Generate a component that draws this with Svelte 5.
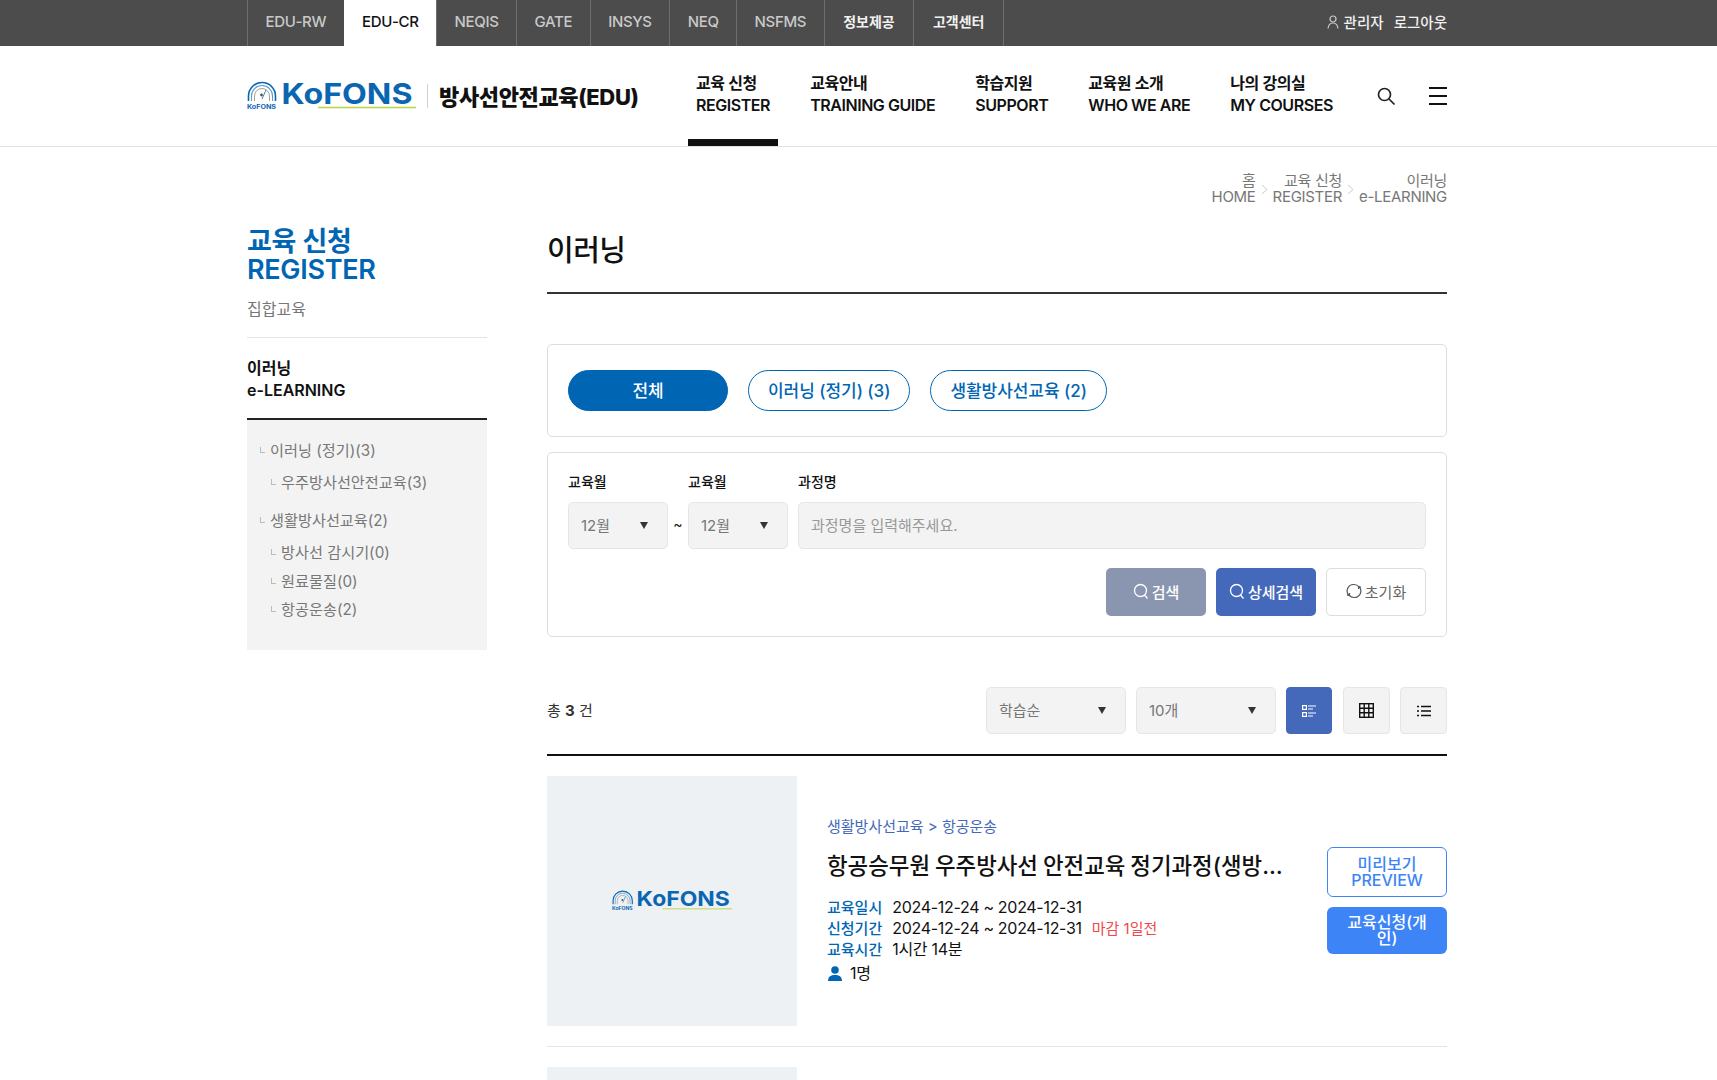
<script>
	const sites = ['EDU-RW', 'EDU-CR', 'NEQIS', 'GATE', 'INSYS', 'NEQ', 'NSFMS', '정보제공', '고객센터'];
	const menus = [
		['교육 신청', 'REGISTER'],
		['교육안내', 'TRAINING GUIDE'],
		['학습지원', 'SUPPORT'],
		['교육원 소개', 'WHO WE ARE'],
		['나의 강의실', 'MY COURSES']
	];
	const crumbs = [['홈', 'HOME'], ['교육 신청', 'REGISTER'], ['이러닝', 'e-LEARNING']];
	const tree = [
		{ label: '이러닝 (정기)(3)', children: ['우주방사선안전교육(3)'] },
		{ label: '생활방사선교육(2)', children: ['방사선 감시기(0)', '원료물질(0)', '항공운송(2)'] }
	];
</script>

{#snippet logo(width)}
	<svg class="logo" {width} viewBox="0 0 170 30" role="img" aria-label="KoFONS">
		<g fill="none" stroke="#0b66b2">
			<path d="M1.5 20 V15 A13.5 13.5 0 0 1 28.5 15 V20" stroke-width="1.6" />
			<path d="M4.5 20 V15 A10.5 10.5 0 0 1 25.5 15 V20" stroke-width="1.1" stroke="#5d9ccf" />
			<path d="M7.5 20 V15 A7.5 7.5 0 0 1 22.5 15 V20" stroke-width="0.9" stroke="#9a9a7a" />
			<path d="M15 18 L19 9" stroke-width="0.8" />
		</g>
		<circle cx="14.5" cy="14" r="1.4" fill="#555" />
		<text x="0" y="28" class="logo-small" textLength="29" lengthAdjust="spacingAndGlyphs">KoFONS</text>
		<text x="34.5" y="23" class="logo-big" textLength="131" lengthAdjust="spacingAndGlyphs">KoFONS</text>
		<path d="M71 26.5 H169" stroke="#b7d444" stroke-width="1.3" />
	</svg>
{/snippet}

<div class="page">
	<div class="topbar">
		<div class="wrap topbar-in">
			<ul class="sites">
				{#each sites as site}
					<li class:active={site === 'EDU-CR'} class:kr={site === '정보제공' || site === '고객센터'}>{site}</li>
				{/each}
			</ul>
			<div class="account">
				<svg width="12" height="14" viewBox="0 0 12 14" fill="none" stroke="#ccc" stroke-width="1.2">
					<circle cx="6" cy="4" r="3" />
					<path d="M1 13.5 C1.5 9.5 3.5 8 6 8 C8.5 8 10.5 9.5 11 13.5" />
				</svg>
				<span>관리자</span>
				<span class="logout">로그아웃</span>
			</div>
		</div>
	</div>

	<header>
		<div class="wrap header-in">
			<div class="brand">
				{@render logo(170)}
				<i class="brand-sep"></i>
				<strong>방사선안전교육(EDU)</strong>
			</div>
			<nav>
				{#each menus as menu, i}
					<a href="#top" class:current={i === 0}>
						<span>{menu[0]}</span>
						<span>{menu[1]}</span>
					</a>
				{/each}
			</nav>
			<svg class="search-icon" width="20" height="20" viewBox="0 0 20 20" fill="none" stroke="#222" stroke-width="1.7">
				<circle cx="8.5" cy="8.5" r="6" />
				<path d="M13 13 L18.5 18.5" />
			</svg>
			<div class="burger"><i></i><i></i><i></i></div>
		</div>
	</header>

	<div class="wrap">
		<div class="crumbs">
			{#each crumbs as crumb, i}
				{#if i > 0}<svg class="crumb-sep" width="7" height="11" viewBox="0 0 7 11" fill="none" stroke="#ccc"><path d="M1 1 L6 5.5 L1 10" /></svg>{/if}
				<div class="crumb">
					<span>{crumb[0]}</span>
					<span>{crumb[1]}</span>
				</div>
			{/each}
		</div>

		<div class="columns">
			<aside>
				<h2>교육 신청<br />REGISTER</h2>
				<p class="side-link">집합교육</p>
				<div class="side-current">이러닝<br />e-LEARNING</div>
				<div class="side-tree">
					{#each tree as group}
						<div class="tree-group">
							<div class="tree-item">{group.label}</div>
							{#each group.children as child}
								<div class="tree-item child">{child}</div>
							{/each}
						</div>
					{/each}
				</div>
			</aside>

			<main>
				<h1>이러닝</h1>

				<div class="box pills">
					<button class="pill on">전체</button>
					<button class="pill">이러닝 (정기) (3)</button>
					<button class="pill">생활방사선교육 (2)</button>
				</div>

				<div class="box filter">
					<div class="fields">
						<div class="field month">
							<span class="field-label">교육월</span>
							<div class="select">12월</div>
						</div>
						<span class="tilde">~</span>
						<div class="field month">
							<span class="field-label">교육월</span>
							<div class="select">12월</div>
						</div>
						<div class="field grow">
							<span class="field-label">과정명</span>
							<div class="text-input">과정명을 입력해주세요.</div>
						</div>
					</div>
					<div class="actions">
						<button class="act gray">
							<svg width="16" height="17" viewBox="0 0 16 17" fill="none" stroke="currentColor" stroke-width="1.3"><circle cx="7.5" cy="7.5" r="6" /><path d="M11.5 12 L14.5 15.5" /></svg>
							검색
						</button>
						<button class="act blue">
							<svg width="16" height="17" viewBox="0 0 16 17" fill="none" stroke="currentColor" stroke-width="1.3"><circle cx="7.5" cy="7.5" r="6" /><path d="M11.5 12 L14.5 15.5" /></svg>
							상세검색
						</button>
						<button class="act plain">
							<svg width="16" height="16" viewBox="0 0 16 16" fill="none" stroke="#555" stroke-width="1.2"><path d="M3 12.5 A6.5 6.5 0 0 1 8 1.5 A6.5 6.5 0 0 1 13 3.8" /><path d="M13 3.5 A6.5 6.5 0 0 1 8 14.5 A6.5 6.5 0 0 1 3 12.2" /><path d="M1 12 L3.2 12.5 L3.6 10" /><path d="M15 4 L12.8 3.8 L12.4 6" /></svg>
							초기화
						</button>
					</div>
				</div>

				<div class="toolbar">
					<div class="total">총 <b>3</b> 건</div>
					<div class="select wide">학습순</div>
					<div class="select wide">10개</div>
					<button class="view on" aria-label="카드형">
						<svg width="14" height="12" viewBox="0 0 14 12" fill="none" stroke="#fff" stroke-width="1.2"><rect x="0.6" y="0.6" width="3.8" height="3.8" /><rect x="0.6" y="7.6" width="3.8" height="3.8" /><path d="M6 1 H14 M6 4 H11 M6 8 H14 M6 11 H11" /></svg>
					</button>
					<button class="view" aria-label="격자형">
						<svg width="15" height="15" viewBox="0 0 15 15" fill="none" stroke="#111" stroke-width="1.4"><rect x="0.7" y="0.7" width="13.6" height="13.6" /><path d="M5.2 0.7 V14.3 M9.8 0.7 V14.3 M0.7 5.2 H14.3 M0.7 9.8 H14.3" /></svg>
					</button>
					<button class="view" aria-label="목록형">
						<svg width="14" height="12" viewBox="0 0 14 12" fill="none" stroke="#111" stroke-width="1.3"><path d="M0 1.5 H2 M4 1.5 H14 M0 6 H2 M4 6 H14 M0 10.5 H2 M4 10.5 H14" /></svg>
					</button>
				</div>

				<article>
					<div class="thumb">{@render logo(121)}</div>
					<div class="info">
						<div class="category">생활방사선교육 &gt; 항공운송</div>
						<div class="title">항공승무원 우주방사선 안전교육 정기과정(생방사선교육 항공운송 1차)</div>
						<dl>
							<div><dt>교육일시</dt><dd>2024-12-24 ~ 2024-12-31</dd></div>
							<div><dt>신청기간</dt><dd>2024-12-24 ~ 2024-12-31</dd><dd class="due">마감 1일전</dd></div>
							<div><dt>교육시간</dt><dd>1시간 14분</dd></div>
						</dl>
						<div class="people">
							<svg width="16" height="15" viewBox="0 0 16 15" fill="#0066b3"><circle cx="8" cy="4" r="3.8" /><path d="M1 15 C1 10.5 4 9 8 9 C12 9 15 10.5 15 15 Z" /></svg>
							1명
						</div>
					</div>
					<div class="card-btns">
						<button class="preview">미리보기<br />PREVIEW</button>
						<button class="apply">교육신청(개인)</button>
					</div>
				</article>

				<article>
					<div class="thumb">{@render logo(121)}</div>
				</article>
			</main>
		</div>
	</div>
</div>

<style>
	:global(body) {
		margin: 0;
		background: #fff;
	}

	.page {
		height: 1080px;
		overflow: hidden;
		font-family: Inter, 'Noto Sans CJK KR', sans-serif;
		color: #111;
	}

	.wrap {
		width: 1200px;
		margin-left: 247px;
	}

	button {
		font-family: inherit;
		cursor: pointer;
	}

	/* top bar */
	.topbar {
		background: #4c4c4c;
		height: 46px;
	}

	.topbar-in {
		display: flex;
		justify-content: space-between;
		align-items: center;
		height: 100%;
	}

	.sites {
		display: flex;
		list-style: none;
		margin: 0;
		padding: 0;
		height: 100%;
		border-right: 1px solid #6e6e6e;
	}

	.sites li {
		display: flex;
		align-items: center;
		padding: 0 17.5px 3px;
		border-left: 1px solid #6e6e6e;
		color: #c9c9c9;
		font-size: 15px;
		font-weight: 500;
		letter-spacing: -0.35px;
	}

	.sites li.kr {
		padding: 0 18.6px 4px;
		color: #f2f2f2;
		font-size: 14px;
		font-weight: 600;
		letter-spacing: 0;
	}

	.sites li.active {
		background: #fff;
		color: #111;
		border-left-color: #fff;
	}

	.account {
		display: flex;
		align-items: center;
		gap: 5px;
		padding-bottom: 3px;
		color: #f2f2f2;
		font-size: 14.5px;
		font-weight: 500;
	}

	.logout {
		margin-left: 5px;
	}

	/* header */
	header {
		height: 100px;
		border-bottom: 1px solid #e2e2e2;
	}

	.header-in {
		display: flex;
		align-items: center;
		height: 100%;
	}

	.brand {
		display: flex;
		align-items: center;
		width: 441px;
	}

	.logo {
		display: block;
	}

	.logo-small {
		font: 700 6px Inter, sans-serif;
		fill: #0b66b2;
	}

	.logo-big {
		font: 700 29px Inter, sans-serif;
		fill: #0b66b2;
	}

	.brand-sep {
		width: 1px;
		height: 24px;
		background: #d0d0d0;
		margin: 0 11px 0 10px;
	}

	.brand strong {
		padding-bottom: 3px;
		font-size: 22px;
		font-weight: 800;
		letter-spacing: -0.35px;
		color: #111;
		white-space: nowrap;
	}

	nav {
		display: flex;
		gap: 24px;
		height: 100%;
	}

	nav a {
		display: flex;
		flex-direction: column;
		justify-content: center;
		padding: 3px 8px 0;
		color: #111;
		font-size: 16px;
		font-weight: 600;
		line-height: 22px;
		letter-spacing: -0.44px;
		text-decoration: none;
		border-bottom: 7px solid transparent;
		box-sizing: border-box;
		white-space: nowrap;
	}

	nav a.current {
		border-bottom-color: #111;
	}

	.search-icon {
		margin-left: auto;
	}

	.burger {
		display: flex;
		flex-direction: column;
		justify-content: space-between;
		width: 18px;
		height: 18px;
		margin-left: 33px;
	}

	.burger i {
		display: block;
		height: 2px;
		background: #111;
	}

	/* breadcrumb */
	.crumbs {
		display: flex;
		justify-content: flex-end;
		align-items: center;
		gap: 6px;
		padding-top: 26px;
		color: #777;
		font-size: 15px;
		line-height: 16px;
		letter-spacing: -0.3px;
	}

	.crumb {
		display: flex;
		flex-direction: column;
		align-items: flex-end;
	}

	.crumb-sep {
		margin: 0 -1px;
	}

	.columns {
		display: flex;
		gap: 60px;
		margin-top: 22px;
	}

	/* sidebar */
	aside {
		width: 240px;
		flex: none;
	}

	aside h2 {
		margin: 0;
		padding-top: 1px;
		color: #0066b3;
		font-size: 27px;
		font-weight: 600;
		line-height: 28px;
		letter-spacing: -0.3px;
	}

	.side-link {
		margin: 13px 0 0;
		padding-bottom: 16px;
		border-bottom: 1px solid #e4e4e4;
		color: #777;
		font-size: 16px;
		line-height: 24px;
	}

	.side-current {
		padding: 19px 0 17px;
		border-bottom: 2px solid #222;
		font-size: 16px;
		font-weight: 600;
		line-height: 22px;
	}

	.side-tree {
		background: #f3f3f3;
		padding: 17px 12px 23px;
		height: 190px;
		color: #777;
		font-size: 15.2px;
	}

	.tree-group + .tree-group {
		margin-top: 10px;
	}

	.tree-item {
		position: relative;
		padding-left: 11px;
		line-height: 28px;
		height: 28px;
	}

	.tree-item::before {
		content: '';
		position: absolute;
		left: 1px;
		top: 10px;
		width: 4px;
		height: 5px;
		border-left: 1px solid #bbb;
		border-bottom: 1px solid #bbb;
	}

	.tree-item.child {
		margin-left: 11px;
		margin-top: 4px;
	}

	.tree-item.child + .child {
		margin-top: 0.5px;
	}

	/* main */
	main {
		flex: 1;
		min-width: 0;
	}

	h1 {
		margin: 0;
		padding: 1px 0 18px;
		border-bottom: 2px solid #333;
		font-size: 29px;
		font-weight: 500;
		line-height: 46px;
		letter-spacing: -0.5px;
	}

	.box {
		border: 1px solid #ddd;
		border-radius: 5px;
		box-sizing: border-box;
	}

	.pills {
		display: flex;
		gap: 20px;
		margin-top: 50px;
		padding: 25px 20px;
		height: 93px;
	}

	.pill {
		height: 41px;
		padding: 0 19px 2px;
		border: 1px solid #0066b3;
		border-radius: 21px;
		background: #fff;
		color: #0066b3;
		font-size: 17px;
		font-weight: 500;
		letter-spacing: -0.05px;
	}

	.pill.on {
		width: 160px;
		background: #0066b3;
		color: #fff;
	}

	.filter {
		margin-top: 15px;
		padding: 19px 20px;
		height: 185px;
	}

	.fields {
		display: flex;
		align-items: flex-end;
		gap: 10px;
	}

	.field {
		display: flex;
		flex-direction: column;
		gap: 10px;
	}

	.field.month {
		width: 100px;
		flex: none;
	}

	.field.grow {
		flex: 1;
	}

	.field-label {
		font-size: 14px;
		font-weight: 500;
		line-height: 20px;
	}

	.tilde {
		width: 10px;
		margin: 0 -5px;
		padding-bottom: 4px;
		text-align: center;
		align-self: flex-end;
		font-size: 14px;
		line-height: 43px;
	}

	.select,
	.text-input {
		position: relative;
		display: flex;
		align-items: center;
		height: 47px;
		padding: 0 12px 2px;
		box-sizing: border-box;
		background: #f3f3f3;
		border: 1px solid #e6e6e6;
		border-radius: 5px;
		color: #777;
		font-size: 15px;
	}

	.select::after {
		content: '';
		position: absolute;
		right: 19px;
		top: 19px;
		border-left: 4px solid transparent;
		border-right: 4px solid transparent;
		border-top: 7px solid #333;
	}

	.text-input {
		color: #999;
	}

	.actions {
		display: flex;
		justify-content: flex-end;
		gap: 10px;
		margin-top: 19px;
	}

	.act {
		display: flex;
		align-items: center;
		justify-content: center;
		gap: 3px;
		width: 100px;
		height: 48px;
		padding: 0 0 2px;
		border: 0;
		border-radius: 5px;
		color: #fff;
		font-size: 15px;
		font-weight: 500;
	}

	.act.gray {
		background: #8a96b0;
	}

	.act.blue {
		background: #4469bb;
	}

	.act.plain {
		background: #fff;
		border: 1px solid #ddd;
		color: #666;
		font-weight: 400;
	}

	.toolbar {
		display: flex;
		align-items: center;
		gap: 10px;
		margin-top: 50px;
		padding-bottom: 20px;
		border-bottom: 2px solid #111;
	}

	.total {
		margin-right: auto;
		padding-bottom: 2px;
		font-size: 15px;
		color: #333;
	}

	.select.wide {
		width: 140px;
	}

	.view {
		display: flex;
		align-items: center;
		justify-content: center;
		width: 47px;
		height: 47px;
		padding: 0;
		background: #f3f3f3;
		border: 1px solid #e6e6e6;
		border-radius: 4px;
	}

	.view.on {
		width: 46px;
		margin-right: 1px;
		background: #4469bb;
		border-color: #4469bb;
	}

	article {
		display: flex;
		align-items: center;
		padding: 20px 0;
		border-bottom: 1px solid #e4e4e4;
	}

	.thumb {
		display: flex;
		align-items: center;
		justify-content: center;
		flex: none;
		width: 250px;
		height: 250px;
		background: #eef1f4;
	}

	.info {
		flex: 1;
		min-width: 0;
		padding: 0 30px;
		font-size: 16px;
		letter-spacing: -0.3px;
	}

	.category {
		color: #4469bb;
		font-size: 15px;
		line-height: 20px;
		letter-spacing: 0;
	}

	.title {
		margin: 12px 0 14px;
		overflow: hidden;
		font-size: 22.4px;
		font-weight: 500;
		line-height: 34px;
		letter-spacing: 0;
		word-spacing: -1px;
		text-overflow: ellipsis;
		white-space: nowrap;
	}

	dl {
		margin: 0;
	}

	dl div {
		display: flex;
		gap: 10px;
		line-height: 21px;
	}

	dt {
		color: #0066b3;
		font-size: 15px;
		font-weight: 500;
		letter-spacing: 0;
	}

	dd {
		margin: 0;
	}

	dd.due {
		color: #f0484b;
		font-size: 15px;
		letter-spacing: 0;
	}

	.people {
		display: flex;
		align-items: center;
		gap: 7px;
		margin-top: 1px;
		line-height: 24px;
	}

	.card-btns {
		display: flex;
		flex-direction: column;
		gap: 10px;
		flex: none;
		width: 120px;
		padding-bottom: 2px;
	}

	.card-btns button {
		padding: 0 16px;
		border-radius: 6px;
		font-size: 16px;
		font-weight: 500;
		line-height: 16px;
		word-break: break-all;
	}

	.preview {
		height: 50px;
		background: #fff;
		border: 1px solid #3d85f6;
		color: #3d85f6;
	}

	.apply {
		height: 47px;
		background: #3d85f6;
		border: 0;
		color: #fff;
	}
</style>
